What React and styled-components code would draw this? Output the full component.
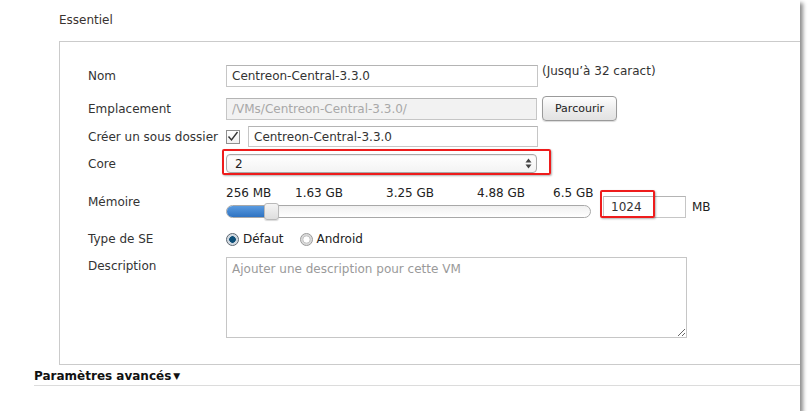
import React from 'react'
import styled, { createGlobalStyle } from 'styled-components'

const GlobalStyle = createGlobalStyle`
    html, body {
        margin: 0;
        padding: 0;
        background: #fff;
    }
    body {
        font-family: "DejaVu Sans", "Liberation Sans", sans-serif;
        font-size: 12px;
        color: #333;
    }
`

const Page = styled.div`
    width: 800px;
    height: 411px;
    background: #fff;
    overflow: hidden;
    box-shadow: 3px 3px 4px rgba(0, 0, 0, 0.45);
`

const Section = styled.section`
    padding: 12px 0 0 59px;
`

const Title = styled.div`
    font-size: 12px;
    line-height: 16px;
    color: #3a3330;
    height: 29px;
`

const Box = styled.div`
    width: 800px;
    border: 1px solid #cbcbcb;
    border-right: none;
    padding: 23px 0 26px 28px;
`

const Row = styled.div`
    display: flex;
    align-items: ${p => p.$top ? 'flex-start' : 'center'};
    height: ${p => p.$h}px;
    margin-top: ${p => p.$mt || 0}px;
`

const Label = styled.div`
    width: 138px;
    flex: none;
    line-height: 16px;
    padding-top: ${p => p.$pt || 0}px;
    white-space: nowrap;
`

const Field = styled.div`
    display: flex;
    align-items: ${p => p.$align || 'center'};
    gap: ${p => p.$gap || 0}px;
`

const TextInput = styled.input`
    box-sizing: border-box;
    width: ${p => p.$w}px;
    height: ${p => p.$h || 22}px;
    border: 1px solid #c6c6c6;
    border-top-color: #b4b4b4;
    background: ${p => p.disabled ? '#f2f2f2' : '#fff'};
    color: ${p => p.disabled ? '#a8a8a8' : '#333'};
    font: 12px "DejaVu Sans", sans-serif;
    padding: 0 ${p => p.$px || 5}px;
    margin: 0;
    outline: none;
    border-radius: 0;
`

const Hint = styled.span`
    align-self: flex-start;
    margin-top: -2px;
    line-height: 16px;
`

const Button = styled.button`
    box-sizing: border-box;
    height: 25px;
    width: 75px;
    border: 1px solid #9a9a9a;
    border-radius: 4px;
    background: linear-gradient(#ffffff, #ececec 55%, #e2e2e2);
    box-shadow: 0 1px 1px rgba(0, 0, 0, 0.15);
    font: 11px "DejaVu Sans", sans-serif;
    color: #222;
    padding: 0;
    margin-top: -1px;
`

const Check = styled.span`
    box-sizing: border-box;
    width: 14px;
    height: 14px;
    border: 1px solid #8f8f8f;
    background: linear-gradient(#fff, #f1f1f1);
    display: flex;
    align-items: center;
    justify-content: center;
    margin-right: 8px;
`

const Marked = styled.div`
    position: relative;
    display: flex;

    &::after {
        content: '';
        position: absolute;
        left: ${p => p.$l}px;
        top: ${p => p.$t}px;
        width: ${p => p.$w}px;
        height: ${p => p.$h}px;
        border: 2px solid #ee1c1c;
        border-radius: 2px;
        box-sizing: border-box;
        box-shadow: 1px 1px 2px rgba(0, 0, 0, 0.3);
        pointer-events: none;
    }
`

const Select = styled.div`
    box-sizing: border-box;
    width: 311px;
    height: 19px;
    border: 1px solid #a9a9a9;
    border-radius: 4px;
    background: linear-gradient(#ffffff, #f3f3f3);
    box-shadow: inset 0 1px 1px rgba(0, 0, 0, 0.08);
    display: flex;
    align-items: center;
    justify-content: space-between;
    padding: 0 4px 0 8px;
    color: #222;
`

const MemoryCol = styled.div`
    display: flex;
    flex-direction: column;
    width: 365px;
`

const Scale = styled.div`
    display: grid;
    grid-template-columns: 69px 91px 91px 76px auto;
    line-height: 14px;
    height: 16px;
    color: #222;
    white-space: nowrap;
`

const Track = styled.div`
    position: relative;
    box-sizing: border-box;
    height: 13px;
    margin-top: 3px;
    border: 1px solid #a8a8a8;
    border-radius: 7px;
    background: linear-gradient(#f0f0f0, #fff);
`

const Fill = styled.div`
    height: 100%;
    border-radius: 6px 0 0 6px;
    background: linear-gradient(#5a9be0, #2f73c2);
`

const Thumb = styled.div`
    position: absolute;
    top: -3px;
    width: 15px;
    height: 17px;
    box-sizing: border-box;
    border: 1px solid #b9b9b9;
    border-radius: 3px;
    background: linear-gradient(#f4f4f4, #dedede);
    box-shadow: 0 1px 1px rgba(0, 0, 0, 0.15);
`

const Unit = styled.span`
    margin-left: 6px;
    color: #222;
`

const Radio = styled.span`
    box-sizing: border-box;
    width: 13px;
    height: 13px;
    border-radius: 50%;
    border: 1px solid ${p => p.$on ? '#5c6670' : '#9a9a9a'};
    background: ${p => p.$on ? 'radial-gradient(circle, #0d4f78 0 3px, #c9d3dc 3.6px, #eef1f4 100%)' : 'radial-gradient(circle, #fff 0 2.8px, #bdbdbd 3.4px, #d4d4d4 4.2px, #f6f6f6 100%)'};
    margin-right: 4px;
`

const RadioText = styled.span`
    margin-right: ${p => p.$mr || 0}px;
    color: #222;
`

const Area = styled.textarea`
    box-sizing: border-box;
    width: 461px;
    height: 81px;
    border: 1px solid #c6c6c6;
    font: 12px "DejaVu Sans", sans-serif;
    padding: 4px 5px;
    margin: 0;
    outline: none;
    color: #333;
    resize: both;

    &::placeholder {
        color: #9a9a9a;
    }
`

const Advanced = styled.div`
    margin-left: 34px;
    padding-top: 1px;
    height: 19px;
    border-bottom: 1px solid #dcdcdc;
    font-weight: bold;
    color: #111;
    line-height: 16px;
    display: flex;
    align-items: center;
    align-self: flex-start;
`

const Caret = styled.span`
    font-size: 9px;
    margin-left: 2px;
`

const Arrows = () => (
    <svg width="7" height="11" viewBox="0 0 7 11">
        <path d="M3.5 0.5 L6.5 4.5 H0.5 Z M3.5 10.5 L6.5 6.5 H0.5 Z" fill="#444" />
    </svg>
)

const Tick = () => (
    <svg width="12" height="11" viewBox="0 0 12 11">
        <path d="M1.5 5.5 L4.5 9 L10.5 1" fill="none" stroke="#333" strokeWidth="1.4" />
    </svg>
)

const scaleLabels = ['256 MB', '1.63 GB', '3.25 GB', '4.88 GB', '6.5 GB']

const App = () => {
    const memory = 1024
    const fillW = 38
    return (
        <>
            <GlobalStyle />
            <Page>
                <Section>
                    <Title>Essentiel</Title>
                    <Box>
                        <Row $h={22}>
                            <Label>Nom</Label>
                            <Field $gap={4}>
                                <TextInput $w={312} defaultValue="Centreon-Central-3.3.0" />
                                <Hint>(Jusqu’à 32 caract)</Hint>
                            </Field>
                        </Row>
                        <Row $h={25} $mt={9}>
                            <Label>Emplacement</Label>
                            <Field $gap={5}>
                                <TextInput $w={311} disabled defaultValue="/VMs/Centreon-Central-3.3.0/" />
                                <Button>Parcourir</Button>
                            </Field>
                        </Row>
                        <Row $h={21} $mt={5}>
                            <Label>Créer un sous dossier</Label>
                            <Field>
                                <Check><Tick /></Check>
                                <TextInput $w={290} $h={21} defaultValue="Centreon-Central-3.3.0" />
                            </Field>
                        </Row>
                        <Row $h={19} $mt={7}>
                            <Label>Core</Label>
                            <Marked $l={-4} $t={-5} $w={329} $h={26}>
                                <Select>
                                    <span>2</span>
                                    <Arrows />
                                </Select>
                            </Marked>
                        </Row>
                        <Row $h={35} $mt={11}>
                            <Label>Mémoire</Label>
                            <Field $align="flex-end" $gap={12}>
                                <MemoryCol>
                                    <Scale>
                                        {scaleLabels.map(l => <span key={l}>{l}</span>)}
                                    </Scale>
                                    <Track>
                                        <Fill style={{ width: fillW }} />
                                        <Thumb style={{ left: fillW - 1 }} />
                                    </Track>
                                </MemoryCol>
                                <Field>
                                    <Marked $l={-3} $t={-6} $w={55} $h={28}>
                                        <TextInput $w={83} $px={7} defaultValue={memory} />
                                    </Marked>
                                    <Unit>MB</Unit>
                                </Field>
                            </Field>
                        </Row>
                        <Row $h={14} $mt={13}>
                            <Label>Type de SE</Label>
                            <Field>
                                <Radio $on />
                                <RadioText $mr={16}>Défaut</RadioText>
                                <Radio />
                                <RadioText>Android</RadioText>
                            </Field>
                        </Row>
                        <Row $h={81} $mt={11} $top>
                            <Label $pt={1}>Description</Label>
                            <Area placeholder="Ajouter une description pour cette VM" />
                        </Row>
                    </Box>
                </Section>
                <Advanced>
                    Paramètres avancés<Caret>▼</Caret>
                </Advanced>
            </Page>
        </>
    )
}

export default App
